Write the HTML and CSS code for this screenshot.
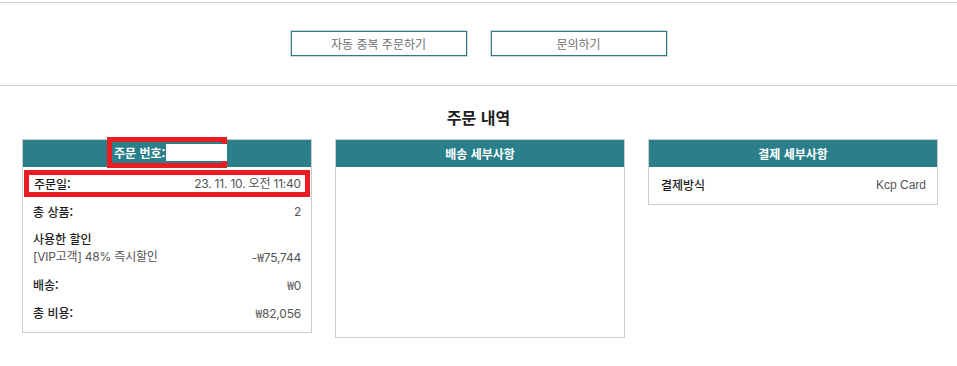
FILE: index.html
```html
<!DOCTYPE html>
<html lang="ko">
<head>
<meta charset="utf-8">
<title>주문 내역</title>
<link rel="stylesheet" href="styles.css">
</head>
<body>
<div class="rule rule-top"></div>
<div class="actions">
  <button class="btn">자동 중복 주문하기</button>
  <button class="btn">문의하기</button>
</div>
<div class="rule"></div>
<h2 class="title">주문 내역</h2>
<div class="cards">
  <section class="card">
    <div class="card-head">
      <span class="mark-head">주문 번호:<span class="redact"></span></span>
    </div>
    <div class="card-body">
      <div class="row hl"><span class="label">주문일:</span><span class="value">23. 11. 10. 오전 11:40</span></div>
      <div class="row"><span class="label">총 상품:</span><span class="value">2</span></div>
      <div class="row"><span class="label">사용한 할인</span></div>
      <div class="row tight"><span class="value">[VIP고객] 48% 즉시할인</span><span class="value">-<span class="won">₩</span>75,744</span></div>
      <div class="row"><span class="label">배송:</span><span class="value"><span class="won">₩</span>0</span></div>
      <div class="row"><span class="label">총 비용:</span><span class="value"><span class="won">₩</span>82,056</span></div>
    </div>
  </section>
  <section class="card">
    <div class="card-head">배송 세부사항</div>
    <div class="card-body empty"></div>
  </section>
  <section class="card">
    <div class="card-head">결제 세부사항</div>
    <div class="card-body pay">
      <div class="row"><span class="label">결제방식</span><span class="value latin">Kcp Card</span></div>
    </div>
  </section>
</div>
</body>
</html>
```
FILE: styles.css
```css
* { box-sizing: border-box; }
body {
  margin: 0;
  background: #fff;
  font-family: "Noto Sans CJK KR", "Noto Sans", sans-serif;
  font-size: 12px;
  color: #222;
}
.rule { height: 1px; background: #cfcfcf; }
.rule-top { margin-top: 2px; }
.actions {
  display: flex;
  justify-content: center;
  gap: 24px;
  padding: 28px 0 29px;
}
.btn {
  width: 176px;
  height: 25px;
  background: #fff;
  border: 1px solid #2a7f8b;
  box-shadow: 0 0 0 1px #d3d7d9;
  font-family: "Noto Sans CJK KR", sans-serif;
  font-size: 12px;
  color: #6f6f6f;
  padding: 0;
}
.title {
  margin: 19px 0 10px;
  text-align: center;
  font-size: 16px;
  line-height: 24px;
  font-weight: 700;
  color: #1e1e1e;
}
.cards {
  display: flex;
  align-items: flex-start;
  gap: 23px;
  padding: 0 19px 0 22px;
}
.card {
  width: 290px;
  flex-shrink: 0;
  border: 1px solid #cccccc;
}
.card-head {
  height: 27px;
  background: #2a7f8b;
  color: #fff;
  font-weight: 700;
  display: flex;
  align-items: center;
  justify-content: center;
  white-space: nowrap;
}
.mark-head {
  display: inline-flex;
  align-items: center;
  flex-shrink: 0;
  white-space: nowrap;
  border: 5px solid #ec1c24;
  height: 31px;
  width: 120px;
  padding: 0 0 0 2px;
  margin-top: -2px;
}
.redact {
  display: inline-block;
  flex-shrink: 0;
  width: 61px;
  height: 17px;
  background: #fff;
  margin-left: 1px;
}
.card-body { padding: 3px 10px 9px 10px; }
.row {
  display: flex;
  justify-content: space-between;
  line-height: 18px;
  margin-top: 9px;
  white-space: nowrap;
}
.row.tight { margin-top: 0; }
.row.hl {
  margin: 0 -9px 0 -9px;
  border: 5px solid #ec1c24;
  padding: 0 4px 0 5px;
  line-height: 17px;
}
.row.hl + .row { margin-top: 6px; }
.label { font-weight: 500; color: #1e1e1e; }
.value { color: #555; font-family: Inter, "Noto Sans CJK KR", sans-serif; font-size: 12px; letter-spacing: -0.2px; }
.won { font-family: "Noto Sans CJK KR", sans-serif; }
.latin { font-family: "Liberation Sans", Arial, sans-serif; letter-spacing: 0; }
.card-body.empty { height: 170px; padding: 0; }
.card-body.pay { padding: 0 11px 10px 12px; }
```
